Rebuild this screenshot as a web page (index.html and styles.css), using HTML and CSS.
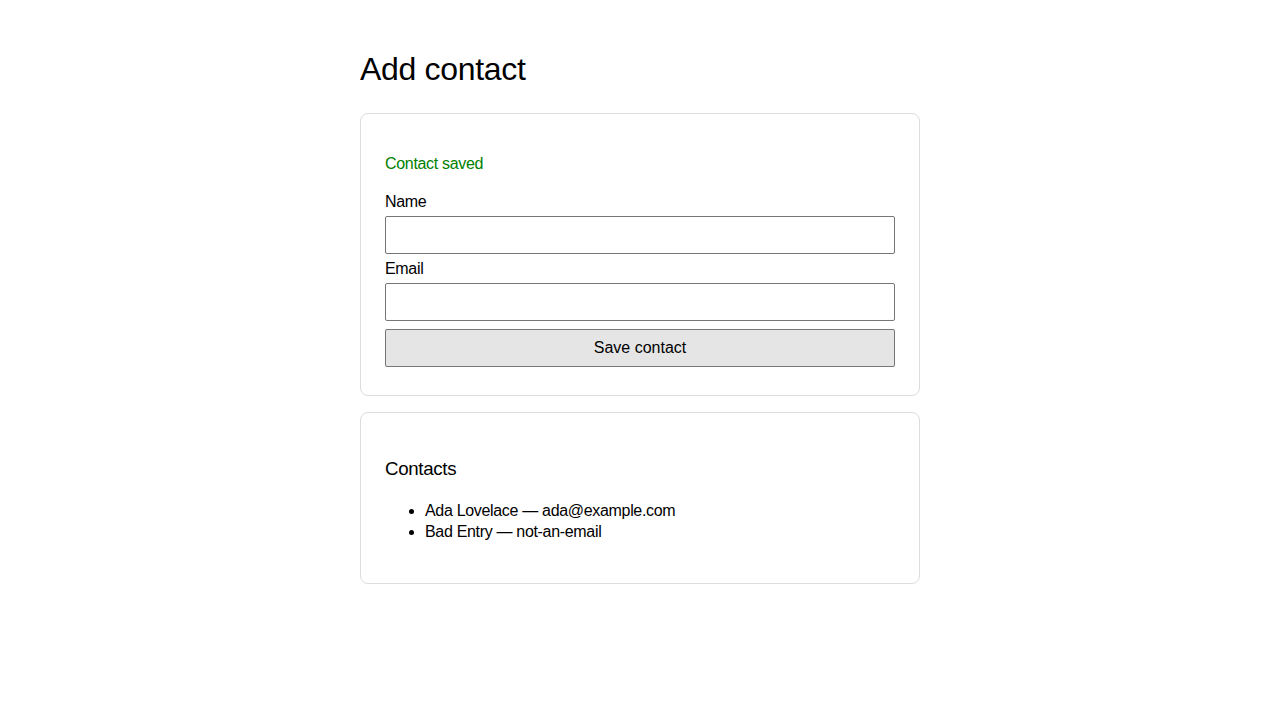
FILE: index.html
```html
<!DOCTYPE html>
<html lang="en">
<head>
<meta charset="utf-8">
<title>Add contact</title>
<link rel="stylesheet" href="styles.css">
</head>
<body>
<main class="page">
  <h1 class="title">Add contact</h1>
  <section class="card">
    <p class="status">Contact saved</p>
    <form class="form">
      <label class="field">
        <span class="field-label">Name</span>
        <input class="field-input" type="text">
      </label>
      <label class="field">
        <span class="field-label">Email</span>
        <input class="field-input" type="email">
      </label>
      <button class="save" type="button">Save contact</button>
    </form>
  </section>
  <section class="card list-card">
    <h2 class="list-title">Contacts</h2>
    <ul class="contacts">
      <li>Ada Lovelace — ada@example.com</li>
      <li>Bad Entry — not-an-email</li>
    </ul>
  </section>
</main>
</body>
</html>
```
FILE: styles.css
```css
html, body {
  margin: 0;
  padding: 0;
  background: #ffffff;
}
body {
  font-family: "Liberation Sans", Arial, sans-serif;
  color: #000;
  font-size: 16px;
  letter-spacing: -0.02em;
}
.page {
  width: 560px;
  margin: 0 auto;
  padding-top: 48px;
}
.title {
  font-size: 32px;
  font-weight: 400;
  line-height: 42px;
  margin: 0 0 23px;
}
.card {
  border: 1px solid #dddddd;
  border-radius: 8px;
  padding: 24px;
  margin-bottom: 16px;
}
.status {
  color: #008000;
  line-height: 22px;
  margin: 14.5px 0 15.5px;
}
.form {
  display: flex;
  flex-direction: column;
}
.field {
  display: flex;
  flex-direction: column;
  margin-bottom: 3px;
}
.field-label {
  line-height: 22px;
  padding-top: 1px;
  margin-bottom: 3px;
}
.field-input {
  box-sizing: border-box;
  height: 38px;
  width: 100%;
  margin: 0;
  border: 1px solid #767676;
  border-radius: 2px;
  padding: 6px 8px;
  font-size: 16px;
  background: #fff;
}
.save {
  box-sizing: border-box;
  height: 38px;
  width: 100%;
  margin: 5px 0 4px;
  border: 1px solid #767676;
  border-radius: 2px;
  background: #e5e5e5;
  font-family: "Liberation Sans", Arial, sans-serif;
  font-size: 16px;
  letter-spacing: normal;
  color: #000;
}
.list-title {
  font-size: 18.72px;
  font-weight: 400;
  line-height: 24px;
  margin: 20px 0 19px;
}
.contacts {
  margin: 0 0 17px;
  padding-left: 40px;
  line-height: 21px;
}
```
